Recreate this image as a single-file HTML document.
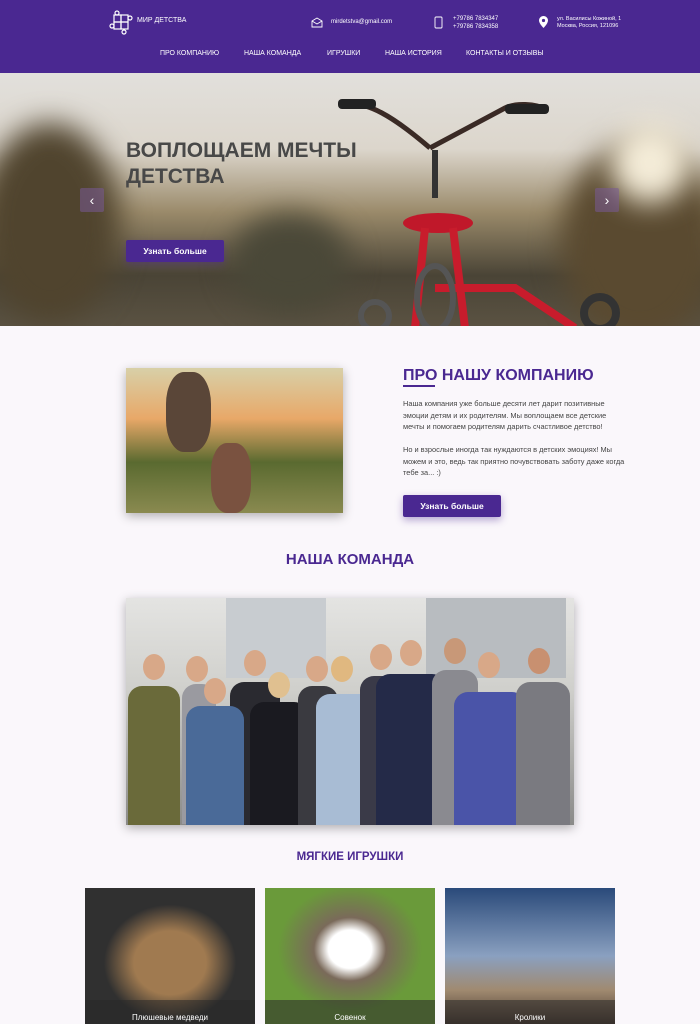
<!DOCTYPE html>
<html><head><meta charset="utf-8"><style>
*{margin:0;padding:0;box-sizing:border-box}
body{width:700px;height:1024px;overflow:hidden;background:#faf7fb;font-family:"Liberation Sans",sans-serif;position:relative}
.hdr{position:absolute;left:0;top:0;width:700px;height:73px;background:#4a2891}
.w{color:#fff;position:absolute;font-size:6px}
.nav{position:absolute;top:50px;font-size:7px;color:#fff}
.hero{position:absolute;top:73px;left:0;width:700px;height:253px;overflow:hidden;
background:linear-gradient(180deg,#e2e0dc 0%,#dcd6cc 30%,#9a8a6a 55%,#4a4436 80%,#5a5242 100%)}
.blob{position:absolute;border-radius:50%;filter:blur(14px)}
.h1{position:absolute;left:126px;top:138px;font-size:21px;font-weight:bold;color:#484848;line-height:26px}
.btn{position:absolute;background:#4a2891;color:#fff;font-weight:bold;font-size:8.5px;text-align:center;border-radius:2px;box-shadow:0 3px 8px rgba(74,40,145,.4)}
.arr{position:absolute;width:24px;height:24px;background:rgba(120,90,150,.55);color:#fff;font-size:14px;text-align:center;line-height:24px;border-radius:2px}
h2{position:absolute;color:#4a2891;font-weight:bold}
.p{position:absolute;left:403px;top:398px;width:222px;font-size:7.4px;line-height:11.5px;color:#444}
.card{position:absolute;top:888px;width:170px;height:136px;overflow:hidden}
.cap{position:absolute;bottom:0;left:0;right:0;height:24px;background:rgba(40,40,40,.55);color:#fff;font-size:8px;text-align:center;padding-top:13px}
.pr{position:absolute;top:0}
.hd{position:absolute;width:22px;height:26px;border-radius:50%;background:#d8a888}
.bd{position:absolute;border-radius:14px 14px 0 0}
</style></head><body>
<div class="hdr">
<svg style="position:absolute;left:109px;top:10px" width="26" height="26" viewBox="0 0 26 26" fill="none" stroke="#fff" stroke-width="1.2"><rect x="5" y="5" width="7" height="7"/><rect x="12" y="5" width="7" height="7"/><rect x="5" y="12" width="7" height="7"/><rect x="12" y="12" width="7" height="7"/><circle cx="8" cy="3" r="2"/><circle cx="21" cy="8" r="2"/><circle cx="3" cy="16" r="2"/><circle cx="15" cy="22" r="2"/></svg>
<div class="w" style="left:137px;top:17px;font-size:7px">МИР ДЕТСТВА</div>
<svg style="position:absolute;left:311px;top:17px" width="12" height="11" viewBox="0 0 12 11" fill="none" stroke="#fff" stroke-width=".9"><path d="M1 4L6 1L11 4V10H1Z M1 4L6 7L11 4"/></svg>
<div class="w" style="left:331px;top:19px">mirdetstva@gmail.com</div>
<svg style="position:absolute;left:433px;top:16px" width="11" height="13" viewBox="0 0 11 13" fill="none" stroke="#fff" stroke-width=".9"><rect x="2" y="1" width="7" height="11" rx="1"/></svg>
<div class="w" style="left:453px;top:15px;line-height:8px">+79786 7834347<br>+79786 7834358</div>
<svg style="position:absolute;left:539px;top:16px" width="9" height="12" viewBox="0 0 9 12"><path d="M4.5 0C2 0 0 2 0 4.5 0 7.5 4.5 12 4.5 12S9 7.5 9 4.5C9 2 7 0 4.5 0Z" fill="#fff"/><circle cx="4.5" cy="4.5" r="1.6" fill="#4a2891"/></svg>
<div class="w" style="left:557px;top:16px;line-height:7px;font-size:5.5px">ул. Василисы Кожиной, 1<br>Москва, Россия, 121096</div>
<div class="nav" style="left:160px">ПРО КОМПАНИЮ</div>
<div class="nav" style="left:244px">НАША КОМАНДА</div>
<div class="nav" style="left:327px">ИГРУШКИ</div>
<div class="nav" style="left:385px">НАША ИСТОРИЯ</div>
<div class="nav" style="left:466px">КОНТАКТЫ И ОТЗЫВЫ</div>
</div>
<div class="hero">
<div class="blob" style="left:-20px;top:50px;width:140px;height:200px;background:#50442e"></div>
<div class="blob" style="left:560px;top:70px;width:160px;height:200px;background:#5a4a30"></div>
<div class="blob" style="left:230px;top:140px;width:120px;height:100px;background:#4a4838"></div>
<div class="blob" style="left:610px;top:50px;width:80px;height:80px;background:#f4ecd8"></div>
<svg style="position:absolute;left:335px;top:15px" width="290" height="240" viewBox="0 0 290 240" fill="none">
<path d="M5 17C30 10 60 30 95 60 M95 60L170 20 C180 15 200 15 213 22" stroke="#3a2a25" stroke-width="5"/>
<rect x="3" y="11" width="38" height="10" rx="4" fill="#222"/><rect x="170" y="16" width="44" height="10" rx="4" fill="#222"/>
<path d="M100 62V110" stroke="#333" stroke-width="6"/>
<ellipse cx="103" cy="135" rx="35" ry="10" fill="#c0182a"/>
<path d="M90 140L80 240 M118 140L130 240 M100 200H180 L240 240" stroke="#c81c2c" stroke-width="8"/>
<ellipse cx="100" cy="210" rx="18" ry="32" stroke="#555" stroke-width="6"/>
<circle cx="265" cy="225" r="16" stroke="#333" stroke-width="8"/>
<circle cx="40" cy="228" r="14" stroke="#555" stroke-width="6"/>
</svg>
</div>
<div class="h1">ВОПЛОЩАЕМ МЕЧТЫ<br>ДЕТСТВА</div>
<div class="arr" style="left:80px;top:188px">‹</div>
<div class="arr" style="left:595px;top:188px">›</div>
<div class="btn" style="left:126px;top:240px;width:98px;height:22px;line-height:22px">Узнать больше</div>

<div style="position:absolute;left:126px;top:368px;width:217px;height:145px;overflow:hidden;background:linear-gradient(180deg,#d8d0a8 0%,#e8a868 35%,#5a6a30 65%,#8a8a50 100%);box-shadow:0 3px 10px rgba(0,0,0,.3)"><div style="position:absolute;left:40px;top:4px;width:45px;height:80px;border-radius:40%;background:#5a4638"></div><div style="position:absolute;left:85px;top:75px;width:40px;height:70px;border-radius:40%;background:#7a5240"></div></div>
<h2 style="left:403px;top:367px;font-size:16px">ПРО НАШУ КОМПАНИЮ</h2>
<div style="position:absolute;left:403px;top:385px;width:32px;height:1.5px;background:#4a2891"></div>
<div class="p">Наша компания уже больше десяти лет дарит позитивные эмоции детям и их родителям. Мы воплощаем все детские мечты и помогаем родителям дарить счастливое детство!<br><br>Но и взрослые иногда так нуждаются в детских эмоциях! Мы можем и это, ведь так приятно почувствовать заботу даже когда тебе за... :)</div>
<div class="btn" style="left:403px;top:495px;width:98px;height:22px;line-height:22px">Узнать больше</div>

<h2 style="left:0;width:700px;text-align:center;top:551px;font-size:15px">НАША КОМАНДА</h2>
<div style="position:absolute;left:126px;top:598px;width:448px;height:227px;overflow:hidden;background:linear-gradient(180deg,#e4e4e2 0%,#d0d0cc 40%,#8a8a88 100%);box-shadow:0 3px 10px rgba(0,0,0,.3)">
<div style="position:absolute;left:100px;top:0;width:100px;height:80px;background:#c8ccd0"></div>
<div style="position:absolute;left:300px;top:0;width:140px;height:80px;background:#b8bcc0"></div>
<div class="hd" style="left:17px;top:56px"></div><div class="bd" style="left:2px;top:88px;width:52px;height:140px;background:#6a6a3a"></div>
<div class="hd" style="left:60px;top:58px"></div><div class="bd" style="left:56px;top:86px;width:34px;height:140px;background:#9a9aa0"></div>
<div class="hd" style="left:118px;top:52px"></div><div class="bd" style="left:104px;top:84px;width:50px;height:143px;background:#2a2a30"></div>
<div class="hd" style="left:78px;top:80px"></div><div class="bd" style="left:60px;top:108px;width:58px;height:120px;background:#4a6a98"></div>
<div class="hd" style="left:142px;top:74px;background:#e0c090"></div><div class="bd" style="left:124px;top:104px;width:58px;height:123px;background:#1a1a20"></div>
<div class="hd" style="left:180px;top:58px"></div><div class="bd" style="left:172px;top:88px;width:40px;height:140px;background:#3a3a40"></div>
<div class="hd" style="left:205px;top:58px;background:#e0b880"></div><div class="bd" style="left:190px;top:96px;width:60px;height:131px;background:#a8bcd4"></div>
<div class="hd" style="left:244px;top:46px"></div><div class="bd" style="left:234px;top:78px;width:40px;height:150px;background:#3a3a48"></div>
<div class="hd" style="left:274px;top:42px"></div><div class="bd" style="left:250px;top:76px;width:70px;height:152px;background:#242a48"></div>
<div class="hd" style="left:318px;top:40px;background:#c89878"></div><div class="bd" style="left:306px;top:72px;width:46px;height:155px;background:#8a8a90"></div>
<div class="hd" style="left:352px;top:54px"></div><div class="bd" style="left:328px;top:94px;width:72px;height:134px;background:#4a54a8"></div>
<div class="hd" style="left:402px;top:50px;background:#c89070"></div><div class="bd" style="left:390px;top:84px;width:54px;height:144px;background:#7a7a80"></div>
</div>

<h2 style="left:0;width:700px;text-align:center;top:851px;font-size:11.5px">МЯГКИЕ ИГРУШКИ</h2>
<div class="card" style="left:85px;background:radial-gradient(ellipse at 50% 55%,#a07a50 0 30%,#303030 55%)"><div class="cap">Плюшевые медведи</div></div>
<div class="card" style="left:265px;background:radial-gradient(ellipse at 50% 45%,#fff 0 18%,#7a6a5a 30%,#6a9a3a 60%)"><div class="cap">Совенок</div></div>
<div class="card" style="left:445px;background:linear-gradient(180deg,#2a4a7a 0%,#8aa0c0 50%,#a08a70 75%,#4a3a30 100%)"><div class="cap">Кролики</div></div>
</body></html>
